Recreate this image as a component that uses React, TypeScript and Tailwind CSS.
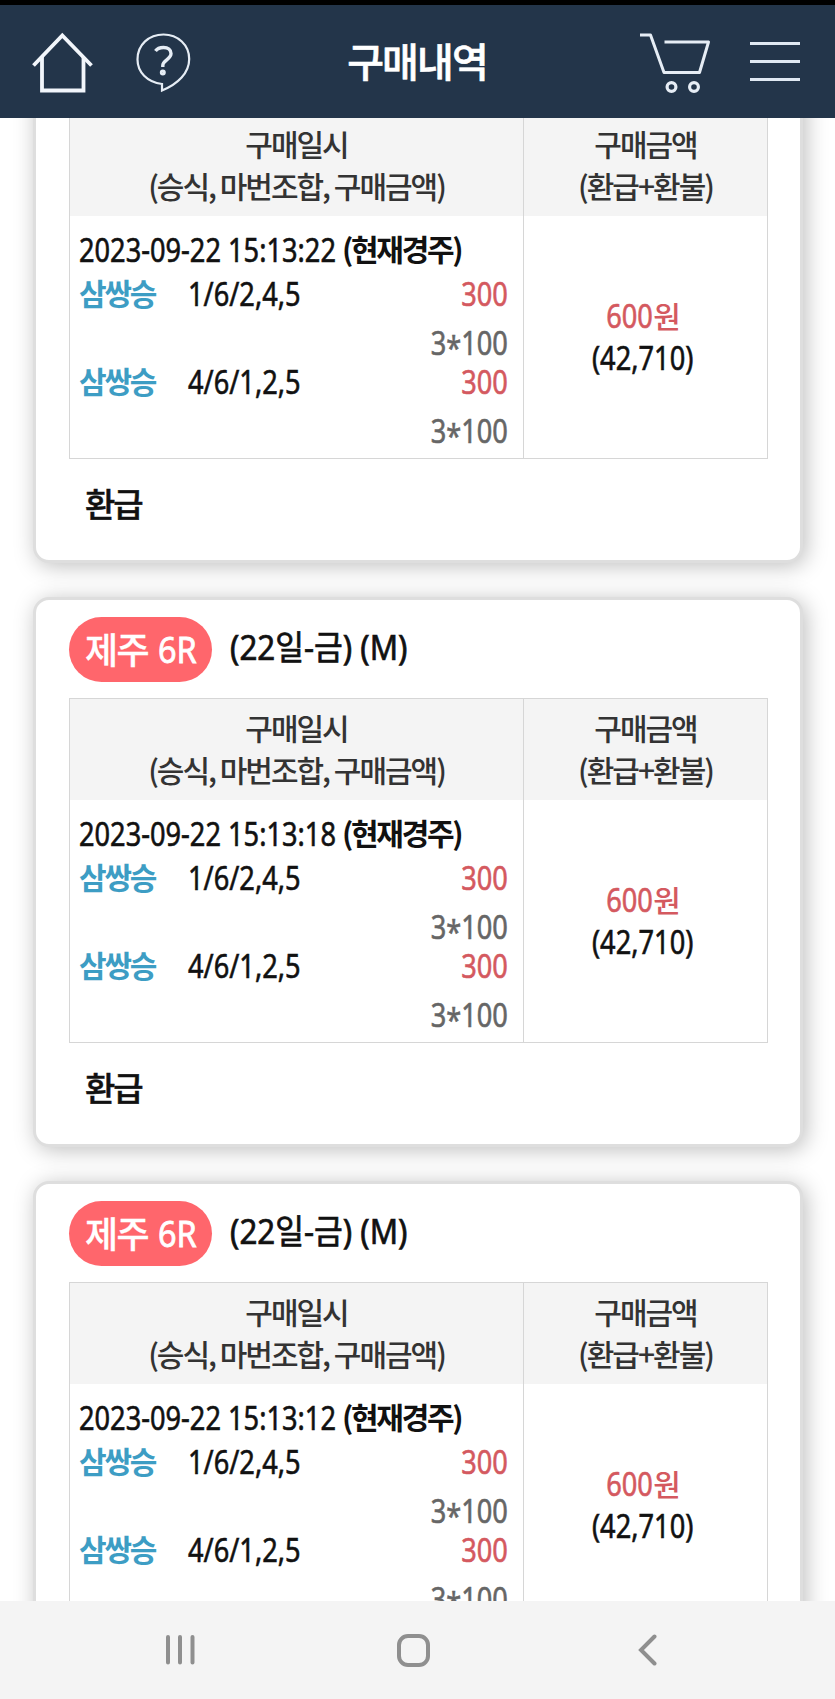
import React from "react";

interface Bet {
  type: string;
  combo: string;
  amount: string;
  unit: string;
}

interface Purchase {
  id: number;
  race?: string;
  time: string;
  total: string;
  refund: string;
  bets: Bet[];
}

const bets: Bet[] = [
  { type: "삼쌍승", combo: "1/6/2,4,5", amount: "300", unit: "100" },
  { type: "삼쌍승", combo: "4/6/1,2,5", amount: "300", unit: "100" },
];

// the first card is scrolled half way, its title row is out of view
const purchases: Purchase[] = [
  { id: 1, time: "2023-09-22 15:13:22", total: "600", refund: "(42,710)", bets },
  { id: 2, race: "6R", time: "2023-09-22 15:13:18", total: "600", refund: "(42,710)", bets },
  { id: 3, race: "6R", time: "2023-09-22 15:13:12", total: "600", refund: "(42,710)", bets },
];

const kr = "font-['Noto_Sans_CJK_KR','Noto_Sans',sans-serif]";
// slightly condensed digits
const num =
  "inline-block whitespace-nowrap font-['Noto_Sans','Noto_Sans_CJK_KR',sans-serif] text-[32px] scale-x-[0.85] [-webkit-text-stroke:0.6px_currentColor]";

const Header = () => (
  <header className="shrink-0 h-[118px] border-t-[5px] border-black bg-[#23354a] flex items-center text-white">
    <div className="flex-1 flex items-center gap-[42px] pl-[31px]">
      <svg className="w-[63px] h-[62px]" viewBox="0 0 63 62" fill="none" stroke="#f2f6fb" strokeWidth="3.8">
        <path d="M2.5 34.5 31.3 4.5 60.5 34.5" />
        <path d="M11 26V59.5H52.500V26" />
      </svg>
      <svg className="w-[56px] h-[62px]" viewBox="0 0 56 62" fill="none" stroke="#e6edf5">
        <path
          d="M26 53C11 51 1.500 41 1.500 28.500C1.500 13.500 13 3.500 27.500 3.500C42 3.500 53.200 14 53.200 28C53.200 42 42 53 26 59.500Z"
          strokeWidth="2.2"
        />
        <path d="M19.500 20C21.500 17 25 16.500 27.500 16.500C32 16.500 35 19 35 22.500C35 28.500 26.800 29 26.800 34.500V36" strokeWidth="3.4" />
        <circle cx="26.800" cy="41.500" r="1.600" strokeWidth="2.800" />
      </svg>
    </div>
    <h1 className={`${kr} pl-[3px] text-[40px] font-medium tracking-[-1.900px] leading-[60px] h-[60px] -mt-[4px] [-webkit-text-stroke:0.6px_currentColor]`}>
      구매내역
    </h1>
    <div className="flex-1 flex items-center justify-end gap-[39px] pr-[35px]">
      <svg className="w-[72px] h-[62px]" viewBox="0 0 72 62" fill="none" stroke="#e6edf5">
        <path d="M1 4H11.500L25 41.500H60.500L69.500 11H25.500" strokeWidth="3" strokeLinejoin="round" />
        <circle cx="32.500" cy="56" r="4.400" strokeWidth="3.200" />
        <circle cx="55" cy="56" r="4.400" strokeWidth="3.200" />
      </svg>
      <div className="w-[50px] flex flex-col gap-[15px]">
        <span className="h-[3px] bg-[#dfe8f2]" />
        <span className="h-[3px] bg-[#dfe8f2]" />
        <span className="h-[3px] bg-[#dfe8f2]" />
      </div>
    </div>
  </header>
);

const BetRow = ({ bet }: { bet: Bet }) => (
  <div className="h-[87.500px]">
    <div className="flex items-center h-[44px]">
      <span className={`${kr} w-[109px] pb-[3px] text-[30px] font-bold tracking-[-2.200px] text-[#3d9dc4]`}>
        {bet.type}
      </span>
      <span className="flex-1">
        <span className={`${num} origin-left leading-[36px]`}>{bet.combo}</span>
      </span>
      <span className={`${num} origin-right leading-[36px] text-[#d4595f]`}>{bet.amount}</span>
    </div>
    <div className="h-[43px] pt-[9px] text-right text-[#666]">
      <span className={`${num} origin-right leading-[36px]`}>
        3<span className="relative top-[5px]">*</span>
        {bet.unit}
      </span>
    </div>
  </div>
);

const PurchaseCard = ({ item }: { item: Purchase }) => (
  <section className="h-[550px] rounded-[16px] border-[3px] border-[#dedede] bg-white shadow-[3px_3px_22px_rgba(0,0,0,0.26)] px-[33px] pt-[17px]">
    <div className="flex items-center h-[65px]">
      {item.race && (
        <>
          <div className="w-[143px] h-[65px] rounded-full bg-[#ff666c] text-white flex items-center pl-[16px]">
            <span className={`${kr} w-[73px] pb-[3px] text-[36px] font-medium tracking-[-1.500px] [-webkit-text-stroke:0.3px_currentColor]`}>
              제주
            </span>
            <span className="origin-left scale-x-[0.9] font-['Noto_Sans',sans-serif] text-[36px] [-webkit-text-stroke:0.8px_currentColor]">
              {item.race}
            </span>
          </div>
          <div className="pl-[18px] pb-[4px]">
            <div className="origin-left scale-x-[0.92] text-[34px] font-['Noto_Sans','Noto_Sans_CJK_KR',sans-serif] text-[#111] [-webkit-text-stroke:0.7px_currentColor]">
              (22일-금) (M)
            </div>
          </div>
        </>
      )}
    </div>

    <div className="mt-[16px] w-[699px] h-[345px] grid grid-cols-[454px_1fr] grid-rows-[101px_1fr] border border-[#d6d6d6]">
      <div className={`${kr} bg-[#f4f4f4] border-r border-[#d6d6d6] text-[30px] font-medium tracking-[-2px] leading-[42px] text-center text-[#333] pt-[7px]`}>
        <p>구매일시</p>
        <p>(승식, 마번조합, 구매금액)</p>
      </div>
      <div className={`${kr} bg-[#f4f4f4] text-[30px] font-medium tracking-[-2px] leading-[42px] text-center text-[#333] pt-[7px]`}>
        <p>구매금액</p>
        <p>(환급+환불)</p>
      </div>
      <div className="border-r border-[#d6d6d6] pl-[9px] pr-[15px] pt-[12px] text-[#111]">
        <div className="flex items-center h-[44px]">
          <div className="w-[263px]">
            <span className={`${num} origin-left`}>{item.time}</span>
          </div>
          <span className={`${kr} shrink-0 pb-[4px] text-[30px] font-bold tracking-[-2.300px]`}>(현재경주)</span>
        </div>
        {item.bets.map((bet, i) => (
          <BetRow key={i} bet={bet} />
        ))}
      </div>
      <div className="flex flex-col items-center justify-center text-[#111] pr-[5px]">
        <div className="flex items-center h-[42px] text-[#d4595f] -ml-[9px]">
          <span className={`${num} origin-right leading-[36px]`}>{item.total}</span>
          <span className={`${kr} pb-[3px] text-[30px] leading-[36px] font-medium tracking-[-2px]`}>원</span>
        </div>
        <div className={`${num} leading-[42px]`}>{item.refund}</div>
      </div>
    </div>

    <p className={`${kr} pl-[16px] pt-[19px] text-[33px] font-medium tracking-[-2px] leading-[50px] text-[#111] [-webkit-text-stroke:0.5px_currentColor]`}>
      환급
    </p>
  </section>
);

const NavBar = () => (
  <nav className="shrink-0 h-[98px] bg-[#f4f4f4] flex items-center text-[#8f8f8f]">
    <svg className="ml-[165px] w-[30px] h-[32px]" viewBox="0 0 30 32" stroke="currentColor" strokeWidth="4" strokeLinecap="round">
      <path d="M3 3V28.500M15 3V28.500M27.500 3V28.500" />
    </svg>
    <div className="ml-[202px] w-[33px] h-[33px] rounded-[11px] border-4 border-current" />
    <svg className="ml-[208px] w-[19px] h-[32px]" viewBox="0 0 19 32" fill="none" stroke="currentColor" strokeWidth="4" strokeLinecap="round">
      <path d="M16.500 2.500 3 16 16.500 29.500" />
    </svg>
  </nav>
);

const App = () => {
  return (
    <div className="w-[835px] h-[1699px] flex flex-col overflow-hidden bg-white">
      <Header />
      <main className="flex-1 min-h-0 overflow-hidden bg-white">
        <div className="-mt-[105px] pl-[33px] pr-[32px] flex flex-col gap-[34px]">
          {purchases.map((item) => (
            <PurchaseCard key={item.id} item={item} />
          ))}
        </div>
      </main>
      <NavBar />
    </div>
  );
};

export default App;
